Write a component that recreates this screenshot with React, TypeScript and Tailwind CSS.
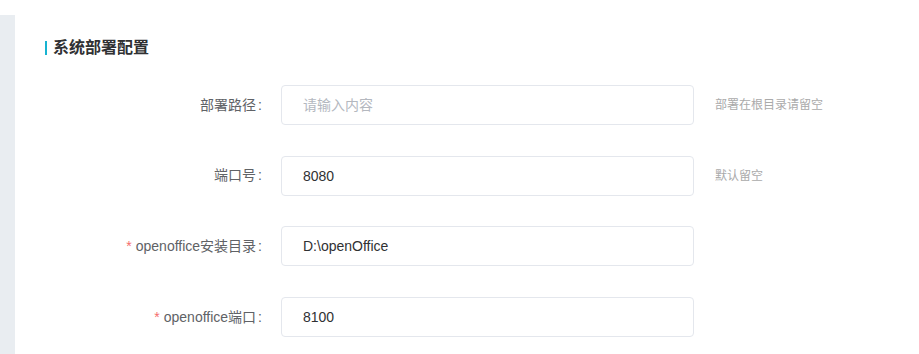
const rows = [
  { label: "部署路径", required: false, value: "", placeholder: "请输入内容", hint: "部署在根目录请留空" },
  { label: "端口号", required: false, value: "8080", placeholder: "请输入内容", hint: "默认留空" },
  { label: "openoffice安装目录", required: true, value: "D:\\openOffice", placeholder: "请输入内容", hint: "" },
  { label: "openoffice端口", required: true, value: "8100", placeholder: "请输入内容", hint: "" },
];

const App = () => {
  return (
    <div
      className="flex h-[354px] w-[919px] overflow-hidden bg-white pt-[15px]"
      style={{ fontFamily: '"Liberation Sans", "Noto Sans CJK SC", sans-serif' }}
    >
      {/* Side strip */}
      <div className="w-[15px] shrink-0 bg-[#e9edf1]" />

      <div className="flex-1 pl-[30px] pt-[25px]">
        {/* Section title */}
        <div className="flex h-[16px] items-center">
          <div className="h-[14px] w-[2px] bg-[#17b3d1]" />
          <h2 className="ml-[6px] text-[16px] font-bold leading-[16px] text-[#303133]">系统部署配置</h2>
        </div>

        {/* Form */}
        <div className="mt-[29px] flex flex-col gap-[30.7px]">
          {rows.map((row) => (
            <div key={row.label} className="flex h-[40px] items-center">
              <label className="w-[217px] text-right text-[14px] text-[#606266]">
                {row.required && <span className="mr-[4px] text-[#f56c6c]">*</span>}
                {row.label}
                <span className="ml-[2px]">:</span>
              </label>
              <input
                readOnly
                value={row.value}
                placeholder={row.placeholder}
                className="ml-[19px] h-[40px] w-[413px] rounded-[4px] border border-[#e4e7ed] bg-white pl-[21px] text-[14px] text-[#303133] outline-none placeholder:text-[#b4b8bf]"
              />
              {row.hint && <span className="ml-[21px] text-[12px] text-[#aaaaaa]">{row.hint}</span>}
            </div>
          ))}
        </div>
      </div>
    </div>
  );
};

export default App;
